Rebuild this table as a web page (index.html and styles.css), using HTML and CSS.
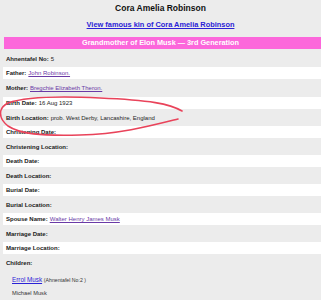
FILE: index.html
```html
<!DOCTYPE html>
<html>
<head>
<meta charset="utf-8">
<link rel="stylesheet" href="styles.css">
</head>
<body>
<div class="page">
  <h1 class="title">Cora Amelia Robinson</h1>
  <p class="kin"><a href="#">View famous kin of Cora Amelia Robinson</a></p>
  <div class="gen">Grandmother of Elon Musk — 3rd Generation</div>
  <div class="rows">
    <div class="row"><b>Ahnentafel No:</b> 5</div>
    <div class="row alt"><b>Father:</b> <a class="visited" href="#">John Robinson.</a></div>
    <div class="row tall"><b>Mother:</b> <a class="visited" href="#">Bregchie Elizabeth Theron.</a></div>
    <div class="row alt"><b>Birth Date:</b> 16 Aug 1923</div>
    <div class="row"><b>Birth Location:</b> prob. West Derby, Lancashire, England</div>
    <div class="row alt"><b>Christening Date:</b></div>
    <div class="row"><b>Christening Location:</b></div>
    <div class="row alt"><b>Death Date:</b></div>
    <div class="row"><b>Death Location:</b></div>
    <div class="row alt"><b>Burial Date:</b></div>
    <div class="row"><b>Burial Location:</b></div>
    <div class="row alt"><b>Spouse Name:</b> <a class="visited" href="#">Walter Henry James Musk</a></div>
    <div class="row"><b>Marriage Date:</b></div>
    <div class="row alt"><b>Marriage Location:</b></div>
    <div class="children">
      <div class="child-label"><b>Children:</b></div>
      <div class="child"><a href="#">Errol Musk</a> <span class="anum">(Ahnentafel No:2 )</span></div>
      <div class="child small">Michael Musk</div>
    </div>
  </div>
  <svg class="ink" width="321" height="300" viewBox="0 0 321 300">
    <path d="M182 111 C170 104, 150 100, 100 98 C60 96, 25 97, 8 103 C-2 108, -2 118, 8 126 C20 134, 40 136, 80 135 C120 134, 150 126, 178 119" fill="none" stroke="#e9435a" stroke-width="1.6" stroke-linecap="round"/>
  </svg>
</div>
</body>
</html>
```

FILE: styles.css
```css
html, body {
  margin: 0;
  padding: 0;
  background: #ececec;
}
body {
  font-family: "Liberation Sans", Arial, sans-serif;
  color: #1e1e1e;
}
.page {
  position: relative;
  width: 321px;
  height: 300px;
  overflow: hidden;
}
.title {
  margin: 0;
  height: 16px;
  line-height: 16px;
  font-size: 8.5px;
  font-weight: bold;
  text-align: center;
  color: #111;
}
.kin {
  margin: 4px 0 7px;
  line-height: 10px;
  font-size: 7.4px;
  font-weight: bold;
  text-align: center;
}
.kin a {
  color: #2b22d6;
  text-decoration: underline;
}
.gen {
  margin: 0 0 1px 4px;
  height: 12px;
  line-height: 12px;
  background: #fc67db;
  color: #fff;
  font-size: 7.3px;
  font-weight: bold;
  text-align: center;
  padding-right: 4px;
}
.rows {
  display: flex;
  flex-direction: column;
}
.row {
  height: 17px;
  display: flex;
  align-items: center;
  padding-left: 6px;
  font-size: 6px;
  white-space: nowrap;
  gap: 2px;
}
.row.alt {
  height: 12px;
  background: #fff;
  margin-left: 3px;
  padding-left: 3px;
}
.row.tall {
  height: 18px;
}
.row b, .child-label b {
  font-weight: bold;
  color: #1a1a1a;
}
a {
  color: #2b22d6;
}
a.visited {
  color: #6a3aa6;
}
.children {
  padding-left: 6px;
  font-size: 6px;
  display: flex;
  flex-direction: column;
}
.child-label {
  height: 18px;
  line-height: 18px;
}
.child {
  padding-left: 6px;
  height: 15px;
  line-height: 15px;
  font-size: 6.3px;
}
.child .anum {
  font-size: 5.2px;
  color: #333;
}
.child.small {
  font-size: 5.7px;
  color: #333;
  height: 13px;
  line-height: 13px;
}
.ink {
  position: absolute;
  left: 0;
  top: 0;
  pointer-events: none;
}
```
